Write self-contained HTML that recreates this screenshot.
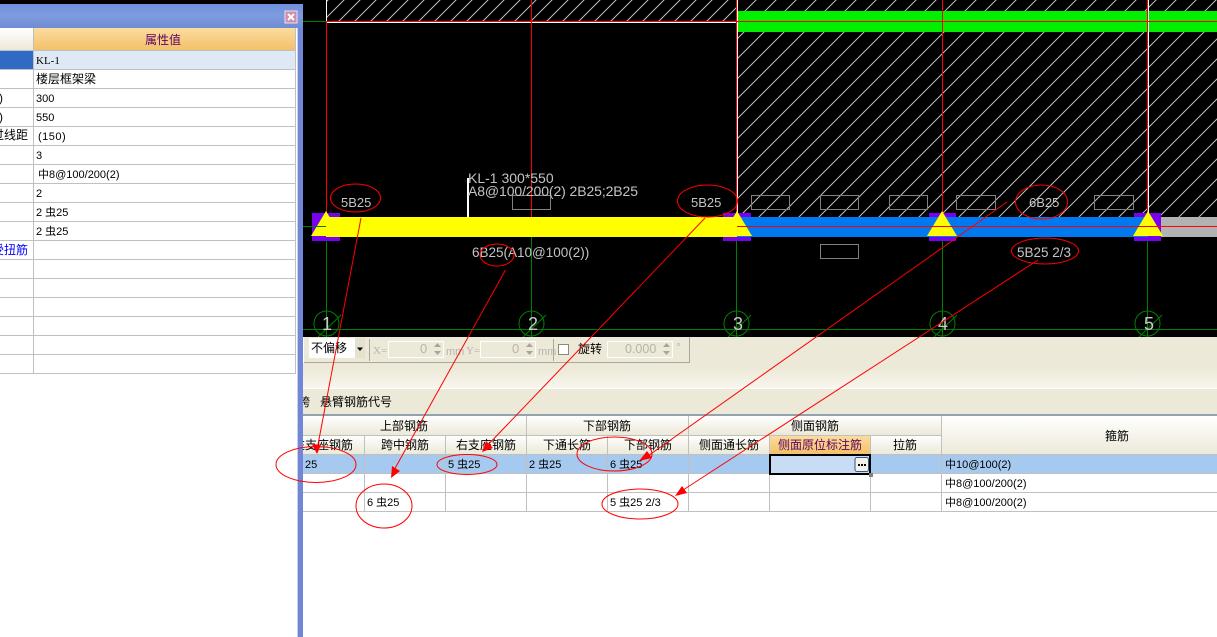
<!DOCTYPE html>
<html><head><meta charset="utf-8"><style>
html,body{margin:0;padding:0;background:#fff;width:1217px;height:637px;overflow:hidden}
svg{display:block;position:absolute;left:0;top:0}
text{font-family:"Liberation Sans","WenQuanYi Zen Hei",sans-serif;font-size:12px;fill:#000}
.c{text-anchor:middle}
.g{fill:#c4c4c4;font-size:14px}
.n{fill:#c8c8c8;font-size:18px;text-anchor:middle}
.d{fill:#b5b5a8}
.v{font-size:11px}
line.r,ellipse{stroke:#f00;fill:none}
</style></head><body>
<svg width="1217" height="637" viewBox="0 0 1217 637" xmlns="http://www.w3.org/2000/svg">
<defs>
<linearGradient id="hd" x1="0" y1="0" x2="0" y2="1"><stop offset="0" stop-color="#fff"/><stop offset="1" stop-color="#ece9d8"/></linearGradient>
<linearGradient id="or" x1="0" y1="0" x2="0" y2="1"><stop offset="0" stop-color="#fcdc9f"/><stop offset="1" stop-color="#f2c16a"/></linearGradient>
<linearGradient id="ti" x1="0" y1="0" x2="0" y2="1"><stop offset="0" stop-color="#6f8fdc"/><stop offset=".5" stop-color="#7e9be0"/><stop offset="1" stop-color="#6f8bd4"/></linearGradient>
<linearGradient id="bd" x1="0" y1="0" x2="0" y2="1"><stop offset="0" stop-color="#ece9d8"/><stop offset="1" stop-color="#f8f6ee"/></linearGradient>
<pattern id="h1" patternUnits="userSpaceOnUse" width="16" height="16" patternTransform="translate(8 0)"><path d="M-2 18L18 -2M-2 2L2 -2M14 18L18 14" stroke="#c0c0c0" stroke-width="1" fill="none"/></pattern>
<pattern id="h2" patternUnits="userSpaceOnUse" width="20" height="20" patternTransform="translate(16 0)"><path d="M-2 22L22 -2M-2 2L2 -2M18 22L22 18" stroke="#c0c0c0" stroke-width="1" fill="none"/></pattern>
</defs>

<!-- CAD area -->
<rect x="0" y="0" width="1217" height="337" fill="#000"/>
<line x1="120.5" y1="0" x2="120.5" y2="5" stroke="#008000"/>
<line x1="223.5" y1="0" x2="223.5" y2="5" stroke="#008000"/>
<rect x="327" y="0" width="410" height="21" fill="url(#h1)"/>
<rect x="738" y="0" width="479" height="217" fill="url(#h2)"/>
<rect x="738" y="11" width="479" height="21" fill="#00f000"/>
<line x1="303" y1="21.5" x2="326" y2="21.5" stroke="#008000"/>
<rect x="326" y="22" width="411" height="1" fill="#fff"/>
<rect x="326" y="0" width="1" height="22" fill="#fff"/>
<rect x="737" y="0" width="1" height="217" fill="#fff"/>
<rect x="1148" y="0" width="1" height="217" fill="#fff"/>
<rect x="326" y="21" width="891" height="1" fill="#f00"/>
<rect x="326" y="21" width="1" height="196" fill="#f00"/>
<rect x="531" y="0" width="1" height="217" fill="#f00"/>
<rect x="736" y="0" width="1" height="217" fill="#f00"/>
<rect x="942" y="0" width="1" height="217" fill="#f00"/>
<rect x="1147" y="0" width="1" height="217" fill="#f00"/>

<!-- placeholder boxes -->
<g fill="none" stroke="#808080">
<rect x="512.5" y="195.5" width="38" height="14"/>
<rect x="751.5" y="195.5" width="38" height="14"/>
<rect x="820.5" y="195.5" width="38" height="14"/>
<rect x="889.5" y="195.5" width="38" height="14"/>
<rect x="956.5" y="195.5" width="39" height="14"/>
<rect x="1094.5" y="195.5" width="39" height="14"/>
<rect x="820.5" y="244.5" width="38" height="14"/>
</g>

<!-- green grid -->
<g stroke="#008000" fill="none">
<line x1="303" y1="329.5" x2="1217" y2="329.5"/>
<line x1="326.5" y1="237" x2="326.5" y2="337"/>
<line x1="531.5" y1="237" x2="531.5" y2="337"/>
<line x1="736.5" y1="237" x2="736.5" y2="337"/>
<line x1="942.5" y1="237" x2="942.5" y2="337"/>
<line x1="1147.5" y1="237" x2="1147.5" y2="337"/>
<circle cx="326.5" cy="323.5" r="12.5"/><line x1="318" y1="337" x2="341" y2="315"/>
<circle cx="531.5" cy="323.5" r="12.5"/><line x1="523" y1="337" x2="546" y2="315"/>
<circle cx="736.5" cy="323.5" r="12.5"/><line x1="728" y1="337" x2="751" y2="315"/>
<circle cx="942.5" cy="323.5" r="12.5"/><line x1="934" y1="337" x2="957" y2="315"/>
<circle cx="1147.5" cy="323.5" r="12.5"/><line x1="1139" y1="337" x2="1162" y2="315"/>
</g>
<text class="n" x="327" y="330">1</text>
<text class="n" x="533" y="330">2</text>
<text class="n" x="738" y="330">3</text>
<text class="n" x="943" y="330">4</text>
<text class="n" x="1149" y="330">5</text>

<!-- beam -->
<g fill="#7a00f0">
<rect x="312" y="213" width="28" height="4"/><rect x="312" y="237" width="28" height="4"/>
<rect x="312" y="213" width="14" height="28"/>
<rect x="723" y="213" width="28" height="4"/><rect x="723" y="237" width="28" height="4"/>
<rect x="929" y="213" width="27" height="4"/><rect x="929" y="237" width="27" height="4"/>
<rect x="1134" y="213" width="27" height="4"/><rect x="1134" y="237" width="27" height="4"/>
</g>
<rect x="326" y="217" width="411" height="20" fill="#ff0"/>
<rect x="737" y="217" width="424" height="20" fill="#0078f0"/>
<rect x="1161" y="217" width="56" height="20" fill="#b2b2b2"/>
<rect x="1148" y="217" width="13" height="20" fill="#7a00f0"/>
<g fill="#ff0">
<polygon points="326,211 341,236 311,236"/>
<polygon points="737,211 752,236 722,236"/>
<polygon points="942,211 957,236 927,236"/>
<polygon points="1148,211 1163,236 1133,236"/>
</g>
<rect x="303" y="226" width="23" height="1" fill="#008000"/>
<rect x="737" y="226" width="480" height="1" fill="#f00"/>

<!-- annotation text -->
<rect x="467" y="178" width="2" height="39" fill="#fff"/>
<text class="g" x="468" y="183">KL-1 300*550</text>
<text class="g" x="468" y="196" textLength="170">A8@100/200(2) 2B25;2B25</text>
<text class="g" x="341" y="207" style="font-size:13px">5B25</text>
<text class="g" x="691" y="207" style="font-size:13px">5B25</text>
<text class="g" x="1029" y="207" style="font-size:13px">6B25</text>
<text class="g" x="472" y="257" style="font-size:13.5px">6B25(A10@100(2))</text>
<text class="g" x="1017" y="257" style="font-size:13.5px">5B25 2/3</text>

<!-- toolbars -->
<rect x="303" y="337" width="914" height="300" fill="#fff"/>
<rect x="303" y="337" width="914" height="31" fill="#ece9d8"/>
<rect x="303" y="368" width="914" height="20" fill="url(#bd)"/>
<rect x="303" y="388" width="914" height="1" fill="#fff"/>
<rect x="303" y="389" width="914" height="26" fill="#ece9d8"/>
<rect x="303" y="414" width="914" height="2" fill="#93a3ad"/>
<rect x="303" y="362" width="386" height="1" fill="#aca899"/>
<rect x="689" y="337" width="1" height="26" fill="#aca899"/>
<rect x="303" y="337" width="1" height="26" fill="#fff"/>
<rect x="309" y="338" width="46" height="20" fill="#fff"/>
<rect x="355" y="338" width="10" height="20" fill="#e4e1cf"/>
<text x="311" y="352" style="font-size:12px">不偏移</text>
<polygon points="357,347.5 363,347.5 360,351" fill="#000"/>
<rect x="369" y="339" width="1" height="22" fill="#aca899"/>
<rect x="553" y="339" width="1" height="22" fill="#aca899"/>
<text class="d" x="373" y="354" style="font-size:11px;font-family:'Liberation Serif',serif">X=</text>
<text class="d" x="466" y="354" style="font-size:11px;font-family:'Liberation Serif',serif">Y=</text>
<g fill="none" stroke="#fff">
<rect x="388.5" y="341.5" width="55" height="16"/>
<rect x="480.5" y="341.5" width="55" height="16"/>
<rect x="607.5" y="341.5" width="65" height="16"/>
</g>
<text class="d" x="420" y="353" style="font-size:13px">0</text>
<text class="d" x="512" y="353" style="font-size:13px">0</text>
<text class="d" x="625" y="353" style="font-size:12.5px">0.000</text>
<g fill="#a9a698">
<polygon points="434,347 441,347 437.5,343"/><polygon points="434,351 441,351 437.5,355"/>
<polygon points="526,347 533,347 529.5,343"/><polygon points="526,351 533,351 529.5,355"/>
<polygon points="663,347 670,347 666.5,343"/><polygon points="663,351 670,351 666.5,355"/>
</g>
<text class="d" x="446" y="355" style="font-size:11px">mm</text>
<text class="d" x="538" y="355" style="font-size:11px">mm</text>
<text class="d" x="676" y="351" style="font-size:12px">°</text>
<rect x="558.5" y="344.5" width="10" height="10" fill="#fff" stroke="#8a8a80"/>
<text x="578" y="353" style="font-size:12px">旋转</text>
<text x="320" y="406" style="font-size:12px">悬臂钢筋代号</text>
<text x="298" y="406" style="font-size:12px">跨</text>

<!-- bottom grid -->
<rect x="303" y="416" width="638" height="19" fill="url(#hd)"/>
<rect x="303" y="435" width="638" height="19" fill="url(#hd)"/>
<rect x="941" y="416" width="276" height="38" fill="url(#hd)"/>
<rect x="770" y="436" width="100" height="18" fill="url(#or)"/>
<rect x="303" y="455" width="914" height="19" fill="#a6c9ef"/>
<g fill="#c0c0c0">
<rect x="303" y="435" width="638" height="1"/>
<rect x="303" y="454" width="914" height="1"/>
<rect x="303" y="473" width="914" height="1"/>
<rect x="303" y="492" width="914" height="1"/>
<rect x="303" y="511" width="914" height="1"/>
<rect x="364" y="435" width="1" height="77"/>
<rect x="445" y="435" width="1" height="77"/>
<rect x="526" y="416" width="1" height="96"/>
<rect x="607" y="435" width="1" height="77"/>
<rect x="688" y="416" width="1" height="96"/>
<rect x="769" y="435" width="1" height="77"/>
<rect x="870" y="435" width="1" height="77"/>
<rect x="941" y="416" width="1" height="96"/>
</g>
<text class="c" x="404" y="430">上部钢筋</text>
<text class="c" x="607" y="430">下部钢筋</text>
<text class="c" x="815" y="430">侧面钢筋</text>
<text class="c" x="1117" y="440">箍筋</text>
<text x="293" y="449">左支座钢筋</text>
<text class="c" x="405" y="449">跨中钢筋</text>
<text class="c" x="486" y="449">右支座钢筋</text>
<text class="c" x="567" y="449">下通长筋</text>
<text class="c" x="648" y="449">下部钢筋</text>
<text class="c" x="729" y="449">侧面通长筋</text>
<text class="c" x="820" y="449" style="fill:#5b0060">侧面原位标注筋</text>
<text class="c" x="905" y="449">拉筋</text>
<text class="v" x="305" y="468">25</text>
<text class="v" x="448" y="468">5 虫25</text>
<text class="v" x="529" y="468">2 虫25</text>
<text class="v" x="610" y="468">6 虫25</text>
<text class="v" x="367" y="506">6 虫25</text>
<text class="v" x="610" y="506">5 虫25  2/3</text>
<text class="v" x="945" y="468">中10@100(2)</text>
<text class="v" x="945" y="487">中8@100/200(2)</text>
<text class="v" x="945" y="506">中8@100/200(2)</text>
<rect x="770" y="455" width="100" height="19" fill="#c8dcf4" stroke="#000" stroke-width="2"/>
<rect x="855" y="457.5" width="13.5" height="14" rx="2" fill="#f4f2ea" stroke="#2a5a8c"/>
<rect x="858" y="464" width="2" height="2" fill="#000"/><rect x="861" y="464" width="2" height="2" fill="#000"/><rect x="864" y="464" width="2" height="2" fill="#000"/>
<rect x="869" y="473" width="4" height="4" fill="#808080"/>

<!-- left window -->
<rect x="0" y="0" width="303" height="4" fill="#000"/>
<rect x="0" y="4" width="303" height="633" fill="#fff"/>
<rect x="297" y="4" width="1" height="633" fill="#c8d0e8"/>
<rect x="298" y="4" width="5" height="633" fill="#7087d8"/>
<rect x="0" y="4" width="303" height="24" fill="url(#ti)"/>
<rect x="285" y="11" width="12" height="12" fill="#d08ca8" stroke="#e8e0f0"/>
<path d="M288 14L294 20M294 14L288 20" stroke="#fff" stroke-width="2"/>
<rect x="0" y="28" width="33" height="22" fill="url(#hd)"/>
<rect x="34" y="28" width="262" height="22" fill="url(#or)"/>
<rect x="0" y="51" width="33" height="18" fill="#316ac5"/>
<rect x="34" y="51" width="262" height="18" fill="#dfe8f5"/>
<g fill="#c0c0c0">
<rect x="0" y="50" width="296" height="1"/><rect x="0" y="69" width="296" height="1"/>
<rect x="0" y="88" width="296" height="1"/><rect x="0" y="107" width="296" height="1"/>
<rect x="0" y="126" width="296" height="1"/><rect x="0" y="145" width="296" height="1"/>
<rect x="0" y="164" width="296" height="1"/><rect x="0" y="183" width="296" height="1"/>
<rect x="0" y="202" width="296" height="1"/><rect x="0" y="221" width="296" height="1"/>
<rect x="0" y="240" width="296" height="1"/><rect x="0" y="259" width="296" height="1"/>
<rect x="0" y="278" width="296" height="1"/><rect x="0" y="297" width="296" height="1"/>
<rect x="0" y="316" width="296" height="1"/><rect x="0" y="335" width="296" height="1"/>
<rect x="0" y="354" width="296" height="1"/><rect x="0" y="373" width="296" height="1"/>
<rect x="33" y="28" width="1" height="346"/><rect x="295" y="28" width="1" height="346"/>
</g>
<text class="c" x="163" y="44" style="fill:#5b0060;font-size:12px">属性值</text>
<text class="v" x="36" y="64" style="font-family:'Liberation Serif',serif">KL-1</text>
<text x="36" y="83">楼层框架梁</text>
<text class="v" x="36" y="102">300</text>
<text class="v" x="36" y="121">550</text>
<text class="v" x="38" y="140" style="letter-spacing:.5px">(150)</text>
<text class="v" x="36" y="159">3</text>
<text class="v" x="38" y="178">中8@100/200(2)</text>
<text class="v" x="36" y="197">2</text>
<text class="v" x="36" y="216">2 虫25</text>
<text class="v" x="36" y="235">2 虫25</text>
<text x="-1" y="102">)</text>
<text x="-1" y="121">)</text>
<text x="-8" y="139">过线距</text>
<text x="-8" y="254" style="fill:#00f">受扭筋</text>

<!-- red overlay -->
<g stroke-width="1">
<ellipse cx="355.5" cy="198" rx="25" ry="14"/>
<ellipse cx="707.5" cy="201" rx="30" ry="16"/>
<ellipse cx="497" cy="255" rx="17" ry="11"/>
<ellipse cx="1041.5" cy="202" rx="26" ry="17"/>
<ellipse cx="1045" cy="251" rx="33.5" ry="13"/>
<ellipse cx="316" cy="464.5" rx="40" ry="18"/>
<ellipse cx="467" cy="464.5" rx="30" ry="10"/>
<ellipse cx="614.5" cy="454" rx="37.5" ry="17"/>
<ellipse cx="384" cy="506" rx="28" ry="22"/>
<ellipse cx="640" cy="504" rx="38" ry="15"/>
<line class="r" x1="361" y1="218" x2="317" y2="450"/>
<line class="r" x1="505.5" y1="270" x2="393" y2="472"/>
<line class="r" x1="705" y1="218" x2="485" y2="448"/>
<line class="r" x1="1007" y1="202" x2="645" y2="458"/>
<line class="r" x1="1038" y1="260" x2="680" y2="492"/>
</g>
<g fill="#f00">
<polygon points="317,454 312,444 321,445"/>
<polygon points="391,478 392,466 400,471"/>
<polygon points="482,452 486,441 493,448"/>
<polygon points="639,461 647,451 652,458"/>
<polygon points="675,496 682,486 687,493"/>
</g>
</svg>
</body></html>
